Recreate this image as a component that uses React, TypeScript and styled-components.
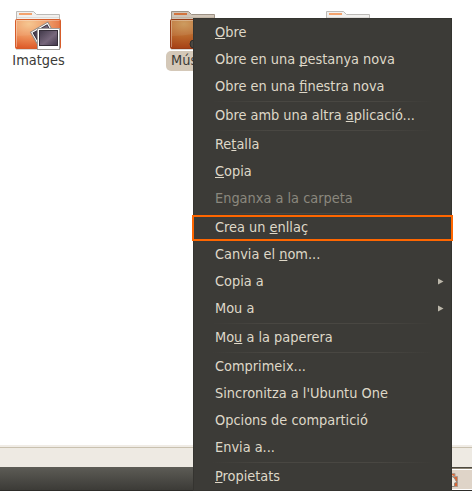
import React from "react";
import styled, { createGlobalStyle } from "styled-components";

const GlobalStyle = createGlobalStyle`
  body { margin: 0; overflow: hidden; background: #fff; }
  * { box-sizing: border-box; }
`;

const Desktop = styled.div`
  position: relative;
  width: 472px;
  height: 491px;
  display: flex;
  flex-direction: column;
  overflow: hidden;
  background: #fff;
  font: 14.4px/17px "DejaVu Sans Condensed", "DejaVu Sans", sans-serif;
  font-stretch: condensed;
  color: #3c3b37;
`;

const Files = styled.main`
  flex: 1;
  display: grid;
  grid-template-columns: 155px 155px 155px;
  align-items: start;
  padding-top: 9px;
  margin-left: -39px;
`;

const FileItem = styled.div`
  display: flex;
  flex-direction: column;
  align-items: center;
`;

const FileName = styled.span<{ $selected?: boolean }>`
  height: 20px;
  line-height: 19px;
  padding: 0 5px;
  border-radius: 5px;
  background: ${(p) => (p.$selected ? "#d4c8b8" : "transparent")};
`;

const StatusBar = styled.div`
  height: 22px;
  background: #eeeae3;
  border-top: 2px solid #f0ece6;
  box-shadow: inset 0 1px #c9c1b0;
`;

const Panel = styled.footer`
  height: 24px;
  display: flex;
  justify-content: flex-end;
  background: linear-gradient(#5d5c56, #3c3b37);
  border-bottom: 1px solid #2d2c29;
`;

const Switcher = styled.div`
  width: 24px;
  border-top: 1px solid #4d4940;
  box-shadow: inset 0 1px #8c8474, inset 0 2px #fff, inset 0 -1px #fff;
  background: #dfd4c8;
  padding: 5px 0 0 4px;
`;

const Menu = styled.ul`
  position: absolute;
  left: 193px;
  top: 18px;
  width: 259px;
  height: 473px;
  margin: 0;
  padding: 0;
  list-style: none;
  background: #3c3b37;
  border: 1px solid #353430;
  color: #dfd8c8;
`;

const MenuRow = styled.li<{ $disabled?: boolean; $marked?: boolean }>`
  position: relative;
  height: 27px;
  line-height: 27px;
  display: flex;
  align-items: center;
  justify-content: space-between;
  padding: 0 7px 0 21px;
  white-space: pre;
  color: ${(p) => (p.$disabled ? "#8b887e" : "inherit")};
  ${(p) =>
    p.$marked &&
    `&::after {
      content: "";
      position: absolute;
      inset: 1px -2px 0 -2px;
      border: 2px solid #ff6600;
    }`}
`;

const Separator = styled.li`
  height: 2px;
  margin: 0 18px;
  background: linear-gradient(90deg, transparent, #494742 25%, #494742 75%, transparent) center / 100% 1px no-repeat;
`;

const Mnemonic = styled.span`
  text-decoration: underline;
  text-decoration-thickness: 1px;
  text-underline-offset: 1px;
  text-decoration-skip-ink: none;
`;

function Folder({ id, kind }: { id: string; kind: "pictures" | "music" | "plain" }) {
  const dark = kind === "music";
  return (
    <svg width="49" height="42" viewBox="0 0 49 42">
      <defs>
        <radialGradient id={id} cx="0.3" cy="0.15" r="0.9">
          <stop offset="0" stopColor={dark ? "#c99554" : "#f5c38a"} />
          <stop offset="0.5" stopColor={dark ? "#b9662b" : "#ed915a"} />
          <stop offset="1" stopColor={dark ? "#a43c13" : "#dc5322"} />
        </radialGradient>
        <linearGradient id={id + "-photo"} x2="1" y2="1">
          <stop stopColor="#41394a" />
          <stop offset="0.55" stopColor="#77677c" />
          <stop offset="1" stopColor="#40364a" />
        </linearGradient>
      </defs>
      <path d="M2.5 39V2.5h17l3 3h23V39z" fill={dark ? "#d0c5b8" : "#f1f0ee"} stroke={dark ? "#9c9184" : "#bcbab7"} />
      <path d="M5 5h13" stroke={dark ? "#d3743d" : "#f3a26c"} strokeWidth="2" />
      <path d="M3 8.5h42" stroke={dark ? "#c1b5a5" : "#dedcd9"} />
      <path d="M2 40.5h44" stroke="#000" strokeOpacity=".15" />
      <rect x="1.5" y="10.5" width="45" height="29" rx="1" fill={`url(#${id})`} stroke={dark ? "#983c17" : "#d65c2a"} />
      <path d="M2.5 38V11.5h43" fill="none" stroke="#fff" strokeOpacity=".35" />
      <path d="M3 27Q24 27 45 19V12H3z" fill="#fff" opacity=".07" />
      {kind === "pictures" && (
        <>
          <g transform="translate(15.8 23) rotate(-30)">
            <rect x="0.5" y="0.5" width="20" height="20" fill="#fff" stroke="#8d8985" />
            <rect x="2.5" y="2.5" width="16" height="14" fill={`url(#${id}-photo)`} stroke="#342d39" />
          </g>
          <rect x="23.5" y="19.5" width="22" height="21" fill="#fff" stroke="#a19e9b" />
          <rect x="25.5" y="21.5" width="18" height="15" fill={`url(#${id}-photo)`} stroke="#342d39" />
        </>
      )}
      {kind === "music" && <circle cx="25" cy="35" r="4" fill="#4a4742" stroke="#302e2b" />}
    </svg>
  );
}

function SubmenuArrow() {
  return (
    <svg width="6" height="7" viewBox="0 0 6 7">
      <path d="M0 0.5v6l5.5-3z" fill="#bcb7aa" />
    </svg>
  );
}

function TrayIcon() {
  return (
    <svg width="20" height="16" viewBox="0 0 20 16">
      <path d="M-3 .5h6v3M-3 3.5h8.5v10h-10z" fill="#dc6432" stroke="#a9988c" />
      <path d="M-1 3L2 4.5 5 9.5 2.5 10v3.5H-1z" fill="#eee7dd" stroke="#92877c" />
    </svg>
  );
}

type Entry = { label: string; key?: number; disabled?: boolean; marked?: boolean; submenu?: boolean };

const groups: Entry[][] = [
  [
    { label: "Obre", key: 0 },
    { label: "Obre en una pestanya nova", key: 12 },
    { label: "Obre en una finestra nova", key: 12 },
  ],
  [{ label: "Obre amb una altra aplicació...", key: 19 }],
  [
    { label: "Retalla", key: 2 },
    { label: "Copia", key: 0 },
    { label: "Enganxa a la carpeta", disabled: true },
  ],
  [
    { label: "Crea un enllaç", key: 8, marked: true },
    { label: "Canvia el nom...", key: 10 },
    { label: "Copia a", submenu: true },
    { label: "Mou a", submenu: true },
  ],
  [{ label: "Mou a la paperera", key: 2 }],
  [
    { label: "Comprimeix..." },
    { label: "Sincronitza a l'Ubuntu One" },
    { label: "Opcions de compartició" },
    { label: "Envia a..." },
  ],
  [{ label: "Propietats", key: 0 }],
];

function Label({ text, mnemonic }: { text: string; mnemonic?: number }) {
  if (mnemonic === undefined) return <span>{text}</span>;
  return (
    <span>
      {text.slice(0, mnemonic)}
      <Mnemonic>{text[mnemonic]}</Mnemonic>
      {text.slice(mnemonic + 1)}
    </span>
  );
}

export default function App() {
  return (
    <>
      <GlobalStyle />
      <Desktop>
        <Files>
          <FileItem>
            <Folder id="pictures" kind="pictures" />
            <FileName>Imatges</FileName>
          </FileItem>
          <FileItem>
            <Folder id="music" kind="music" />
            <FileName $selected>Música</FileName>
          </FileItem>
          <FileItem>
            <Folder id="plain" kind="plain" />
          </FileItem>
        </Files>
        <StatusBar />
        <Panel>
          <Switcher>
            <TrayIcon />
          </Switcher>
        </Panel>
        <Menu>
          {groups.map((group, g) => (
            <React.Fragment key={g}>
              {g > 0 && <Separator />}
              {group.map((e) => (
                <MenuRow key={e.label} $disabled={e.disabled} $marked={e.marked}>
                  <Label text={e.label} mnemonic={e.key} />
                  {e.submenu && <SubmenuArrow />}
                </MenuRow>
              ))}
            </React.Fragment>
          ))}
        </Menu>
      </Desktop>
    </>
  );
}
